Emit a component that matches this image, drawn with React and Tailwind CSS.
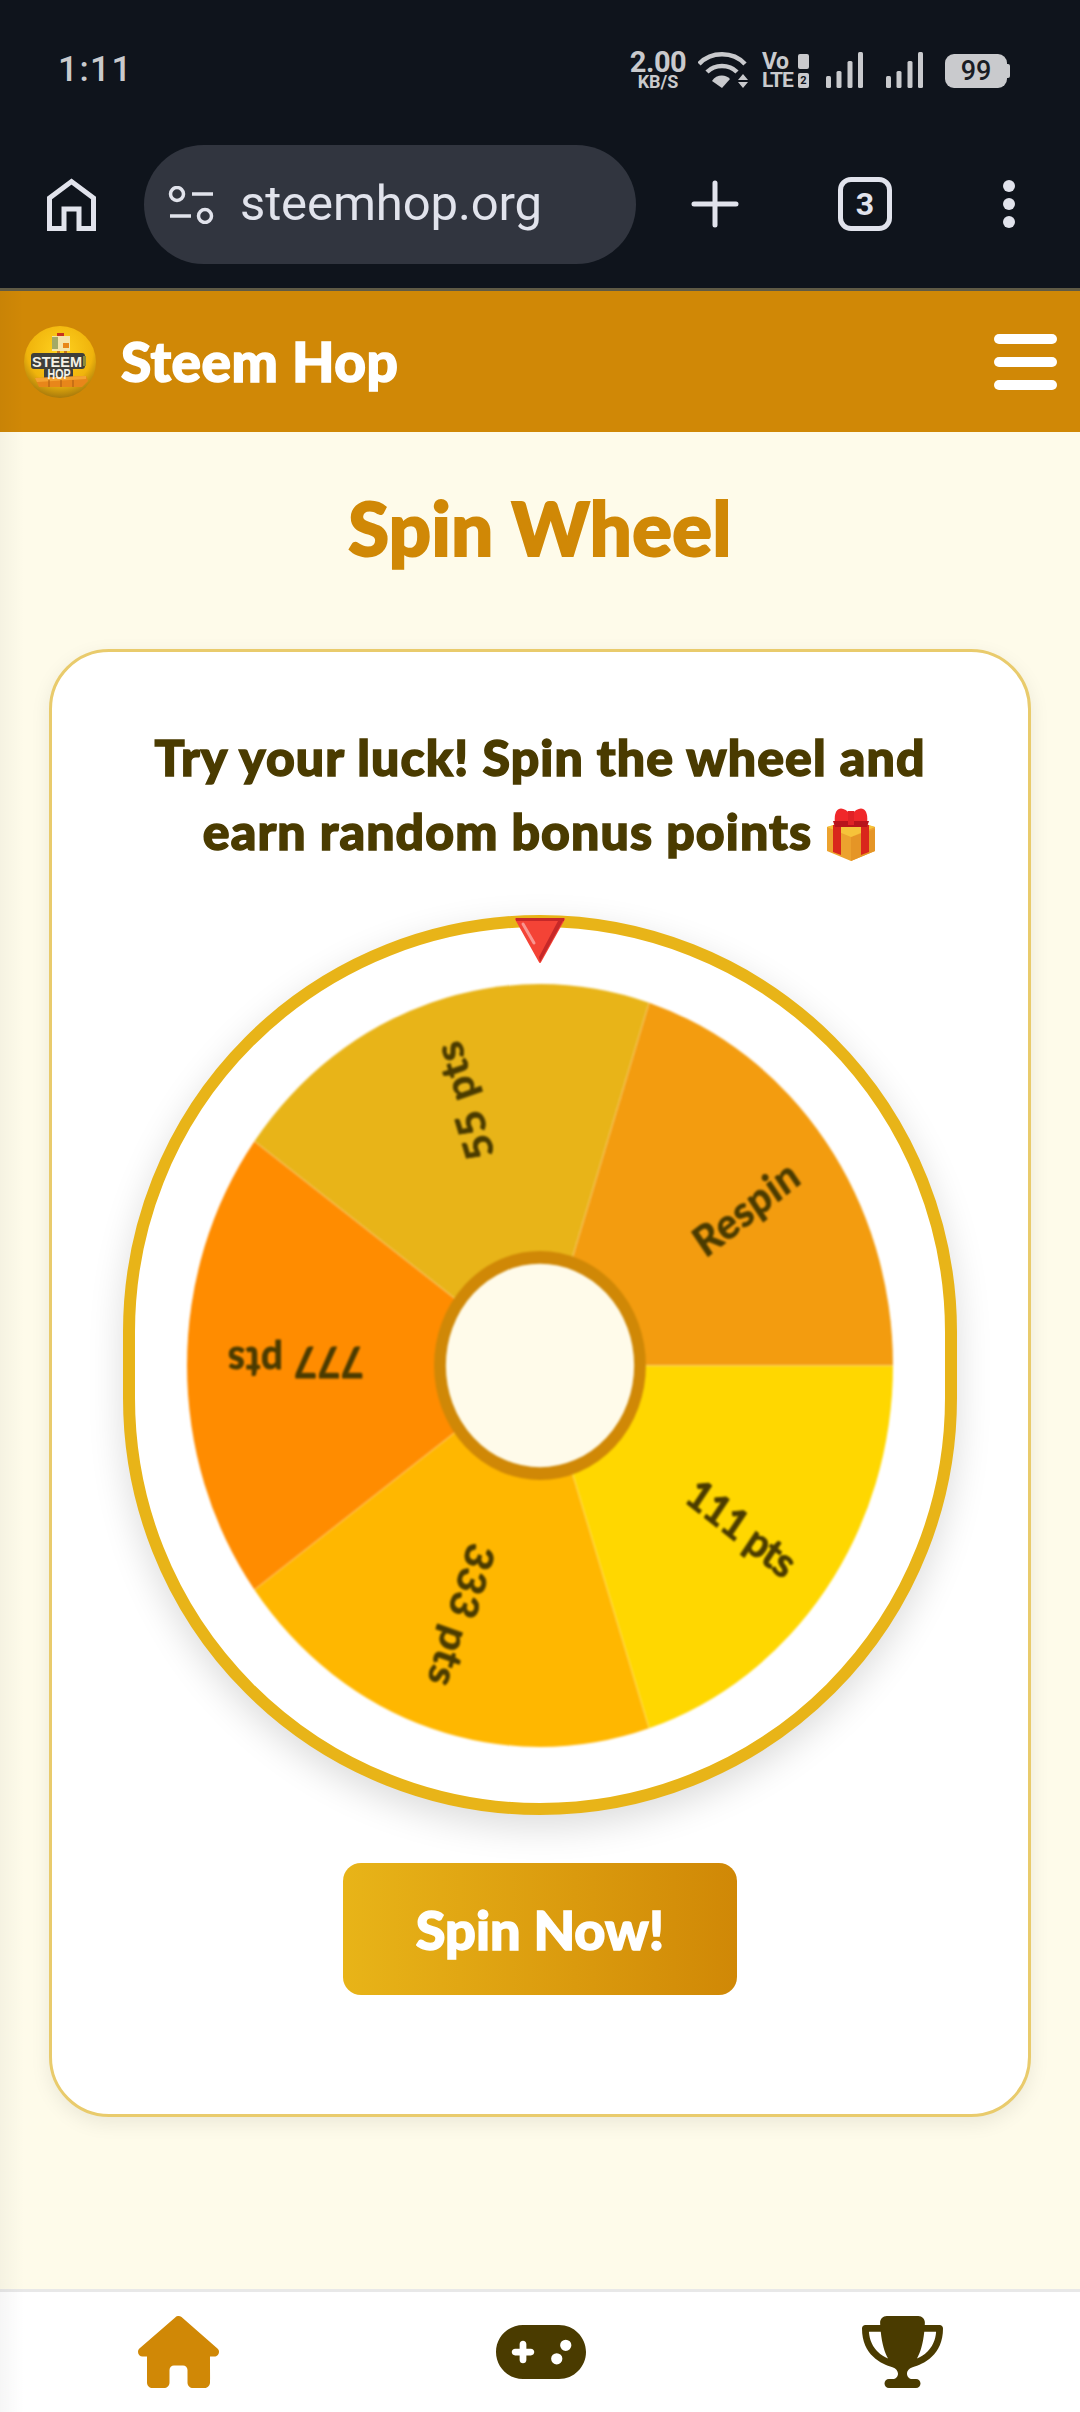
import React from "react";
import { FaHouse, FaGamepad, FaTrophy } from "react-icons/fa6";

const sectors = [
  { from: 0, to: 72, color: "#ffd700", label: "111 pts" },
  { from: 72, to: 144, color: "#ffb700", label: "333 pts" },
  { from: 144, to: 216, color: "#ff8c00", label: "777 pts" },
  { from: 216, to: 288, color: "#e8b418", label: "55 pts" },
  { from: 288, to: 360, color: "#f39c0f", label: "Respin" },
];

function pt(a) {
  const r = (a * Math.PI) / 180;
  return `${150 + 150 * Math.cos(r)} ${150 + 150 * Math.sin(r)}`;
}

function Wheel() {
  return (
    <svg viewBox="0 0 300 300" preserveAspectRatio="none" className="w-[706px] h-[763px] blur-[0.8px]">
      {sectors.map((s) => (
        <path key={s.label} d={`M150 150 L${pt(s.from)} A150 150 0 0 1 ${pt(s.to)} Z`} fill={s.color} />
      ))}
      {sectors.map((s) => (
        <line key={s.label} x1="150" y1="150" x2={150 + 150 * Math.cos((s.from * Math.PI) / 180)} y2={150 + 150 * Math.sin((s.from * Math.PI) / 180)} stroke="#fff" strokeOpacity="0.2" strokeWidth="0.6" />
      ))}
      {sectors.map((s) => (
        <text
          key={s.label}
          transform={`translate(150 150) rotate(${(s.from + s.to) / 2})`}
          x="133"
          y="1"
          textAnchor="end"
          dominantBaseline="central"
          fill="#4a3b00"
          stroke="#4a3b00"
          strokeWidth="0.35"
          strokeLinejoin="round"
          fontSize="16.5"
          fontWeight="700"
          letterSpacing={s.label === "111 pts" ? "-0.4" : "0.4"}
          fontFamily="Lato, sans-serif"
        >
          {s.label}
        </text>
      ))}
      <circle cx="150" cy="150" r="42.5" fill="#fffbea" stroke="#d08806" strokeWidth="5" />
    </svg>
  );
}

function Logo() {
  return (
    <svg viewBox="0 0 72 72" className="w-[72px] h-[72px] shrink-0">
      <defs>
        <radialGradient id="ball" cx="50%" cy="35%" r="65%">
          <stop offset="0%" stopColor="#ffd21f" />
          <stop offset="70%" stopColor="#f0b40c" />
          <stop offset="100%" stopColor="#a87a0c" />
        </radialGradient>
      </defs>
      <circle cx="36" cy="36" r="36" fill="url(#ball)" />
      <rect x="33" y="7" width="7" height="3" fill="#c8321e" />
      <rect x="28" y="10" width="18" height="15" fill="#f5e3a8" />
      <rect x="28" y="11" width="6" height="12" fill="#a3a965" />
      <rect x="39" y="17" width="6" height="5" fill="#e8861a" />
      <rect x="33" y="25" width="3" height="4" fill="#c9741a" />
      <rect x="40" y="25" width="3" height="4" fill="#c9741a" />
      <rect x="7" y="27" width="54" height="16" rx="3" fill="#3f3f3a" />
      <rect x="20" y="42" width="29" height="12" rx="2" fill="#3f3f3a" />
      <rect x="59" y="30" width="3" height="10" fill="#8a8a3a" />
      <path d="M11 52 L62 50 L64 55 L58 61 L15 61 Z" fill="#e8861a" />
      <path d="M11 52 L62 50 L62 53 L13 56 Z" fill="#f5a331" />
      <path d="M25 54V61M37 54V61M49 54V61" stroke="#a85a10" strokeWidth="1" />
      <text x="33" y="41" textAnchor="middle" fill="#f4f1e6" fontSize="14" fontWeight="700" fontFamily="'Liberation Sans', sans-serif" textLength="50" lengthAdjust="spacingAndGlyphs">STEEM</text>
      <text x="35" y="53" textAnchor="middle" fill="#f4f1e6" fontSize="14" fontWeight="700" fontFamily="'Liberation Sans', sans-serif" textLength="23" lengthAdjust="spacingAndGlyphs">HOP</text>
    </svg>
  );
}

function Gift() {
  return (
    <svg viewBox="0 0 52 54" className="inline-block w-[52px] h-[54px] align-[-11px]">
      <path d="M2 20 L26 14 L50 20 V44 L26 54 L2 44 Z" fill="#eca22e" />
      <path d="M26 30 V54 L50 44 V22 Z" fill="#e59526" />
      <path d="M2 20 L26 12 L50 20 L26 30 Z" fill="#f6c33a" />
      <path d="M8 18 H16 V48 L8 45 Z M36 18 H44 V45 L36 48 Z" fill="#d9261c" />
      <path d="M26 8 C16 -4 8 2 10 16 L24 14 Z" fill="#f0282a" />
      <path d="M26 8 C36 -4 44 2 42 16 L28 14 Z" fill="#f0282a" />
      <path d="M8 14 L44 14 L42 20 L10 20 Z" fill="#b8141c" />
      <rect x="23" y="4" width="6" height="14" fill="#e02226" />
    </svg>
  );
}

function Pointer() {
  return (
    <svg viewBox="0 0 52 46" className="w-[52px] h-[46px]">
      <path d="M2 2 H50 L26 45 Z" fill="#f44336" stroke="#f44336" strokeWidth="2" strokeLinejoin="round" />
      <path d="M50 2 L26 45 L25 40 L44 4 Z" fill="#c62828" />
      <path d="M2 1 H50 V4 H2 Z" fill="#c62828" />
      <path d="M9 7 L20 26" stroke="#f99590" strokeWidth="3" strokeLinecap="round" />
    </svg>
  );
}

function SignalBars() {
  return (
    <svg viewBox="0 0 38 36" className="w-[38px] h-[36px]" fill="#c9cacd">
      <rect x="0" y="24" width="5" height="12" rx="1.5" />
      <rect x="10.5" y="19" width="5" height="17" rx="1.5" />
      <rect x="21.5" y="9" width="5" height="27" rx="1.5" />
      <rect x="32" y="0" width="5" height="36" rx="1.5" />
    </svg>
  );
}

function StatusBar() {
  return (
    <div className="h-[145px] flex justify-between pl-[58px] pr-[70px] pt-[52px] text-[#c9cacd]" style={{ fontFamily: "Roboto, sans-serif" }}>
      <span className="text-[35px] leading-[36px] font-medium tracking-[1.5px]">1:11</span>
      <div className="flex items-start h-[37px]">
        <div className="w-[58px] flex flex-col items-center font-bold">
          <span className="text-[29px] leading-[21px] tracking-[-0.5px]">2.00</span>
          <span className="text-[18px] leading-[17px]">KB/S</span>
        </div>
        <svg viewBox="0 0 50 36" className="ml-[11px] w-[50px] h-[36px]" fill="none" stroke="#c9cacd" strokeWidth="4.5">
          <path d="M1 12 C13 -1 35 -1 47 12" />
          <path d="M9 20 C17 12 31 12 39 20" />
          <path d="M14 29 L24 36 L32 27 C28 22 18 22 14 29 Z" fill="#c9cacd" stroke="none" />
          <path d="M40 28 L45 22 L50 28 Z M40 30 L50 30 L45 36 Z" fill="#c9cacd" stroke="none" />
        </svg>
        <div className="ml-[14px] w-[47px] flex flex-col font-bold">
          <div className="flex justify-between items-center h-[19px]">
            <span className="text-[23px] leading-[19px] tracking-[-0.5px]">Vo</span>
            <span className="w-[11px] h-[15px] border-[3px] border-[#c9cacd] rounded-[2px] bg-[#c9cacd]" />
          </div>
          <div className="flex justify-between items-center h-[18px]">
            <span className="text-[21px] leading-[18px] tracking-[-1px]">LTE</span>
            <span className="w-[11px] h-[15px] bg-[#c9cacd] rounded-[2px] text-[11px] leading-[15px] text-center text-[#0f141c]">2</span>
          </div>
        </div>
        <div className="ml-[17px]"><SignalBars /></div>
        <div className="ml-[22px]"><SignalBars /></div>
        <div className="ml-[21px] w-[62px] h-[34px] mt-[2px] bg-[#c9cacd] rounded-[9px] text-[#1a1d24] text-[27px] leading-[34px] text-center font-medium">99</div>
        <div className="w-[3px] h-[14px] mt-[12px] bg-[#c9cacd] rounded-r-[2px]" />
      </div>
    </div>
  );
}

function Toolbar() {
  return (
    <div className="h-[143px] flex items-start pl-[47px] text-[#e1e3ec]" style={{ fontFamily: "Roboto, sans-serif" }}>
      <svg viewBox="0 0 49 53" className="mt-[33px] w-[49px] h-[53px]" fill="none" stroke="#e1e3ec" strokeWidth="5">
        <path d="M2.5 50.5 V20 L24.5 3.5 L46.5 20 V50.5 H32 V31 H17 V50.5 Z" />
      </svg>
      <div className="ml-[48px] w-[492px] h-[119px] rounded-full bg-[#31353f] flex items-center pl-[24px]">
        <svg viewBox="0 0 46 38" className="w-[46px] h-[38px]" fill="none" stroke="#e1e3ec" strokeWidth="3.5">
          <circle cx="9" cy="8" r="6.5" />
          <path d="M24 8 H45 M2 30 H23" />
          <circle cx="37" cy="30" r="6.5" />
        </svg>
        <span className="ml-[26px] text-[49px] leading-none pb-[3px] tracking-[-0.1px]">steemhop.org</span>
      </div>
      <svg viewBox="0 0 48 48" className="ml-[55px] mt-[35px] w-[48px] h-[48px]" stroke="#e1e3ec" strokeWidth="5" strokeLinecap="round">
        <path d="M24 3 V45 M3 24 H45" />
      </svg>
      <div className="ml-[99px] mt-[32px] w-[54px] h-[54px] border-[5px] border-[#e1e3ec] rounded-[13px] flex items-center justify-center text-[32px] font-bold leading-none">3</div>
      <div className="ml-[111px] mt-[35px] h-[48px] flex flex-col justify-between">
        <span className="w-[12px] h-[12px] rounded-full bg-[#e1e3ec]" />
        <span className="w-[12px] h-[12px] rounded-full bg-[#e1e3ec]" />
        <span className="w-[12px] h-[12px] rounded-full bg-[#e1e3ec]" />
      </div>
    </div>
  );
}

export default function App() {
  return (
    <div className="relative w-[1080px] h-[2412px] flex flex-col overflow-hidden bg-[#fefbea]" style={{ fontFamily: "Lato, sans-serif" }}>
      <div className="bg-[#0f141c]">
        <StatusBar />
        <Toolbar />
      </div>
      <header className="h-[144px] bg-[#d08806] border-t-[3px] border-[#5f5a45] flex items-center justify-between pl-[24px] pr-[23px]">
        <div className="flex items-center">
          <Logo />
          <span className="ml-[25px] text-white text-[55px] leading-none font-black [-webkit-text-stroke:1.5px_#ffffff] tracking-[0.5px]">Steem Hop</span>
        </div>
        <div className="w-[63px] flex flex-col gap-[13px]">
          <span className="h-[10px] rounded-full bg-white" />
          <span className="h-[10px] rounded-full bg-white" />
          <span className="h-[10px] rounded-full bg-white" />
        </div>
      </header>
      <main className="flex-1 flex flex-col items-center">
        <h1 className="mt-[58px] text-[#d08806] text-[74px] leading-[76px] font-black [-webkit-text-stroke:2px_#d08806] tracking-[0.5px]">Spin Wheel</h1>
        <section className="mt-[83px] w-[982px] h-[1468px] bg-white border-[3px] border-[#e9cb6c] rounded-[60px] shadow-[0_6px_20px_rgba(0,0,0,0.08)] flex flex-col items-center">
          <p className="mt-[68px] w-[800px] text-center text-[#4a3b00] text-[50px] leading-[74px] font-black tracking-[1.1px] [-webkit-text-stroke:1.5px_#4a3b00]">
            Try your luck! Spin the wheel and earn random bonus points <Gift />
          </p>
          <div className="relative mt-[47px] w-[834px] h-[900px] border-[12px] border-[#e8b418] rounded-full bg-white shadow-[0_12px_36px_rgba(0,0,0,0.14)] flex items-center justify-center">
            <div className="absolute top-[-10px] left-[379px]"><Pointer /></div>
            <Wheel />
          </div>
          <button className="mt-[48px] w-[394px] h-[132px] rounded-[18px] bg-gradient-to-r from-[#e8b418] to-[#d08806] text-white text-[54px] font-black [-webkit-text-stroke:1.5px_#ffffff]">Spin Now!</button>
        </section>
      </main>
      <nav className="h-[123px] bg-white border-t-[3px] border-[#e8e8e8] flex items-start justify-between pl-[138px] pr-[137px] pt-[24px]">
        <FaHouse className="w-[81px] h-[72px] text-[#d08806]" />
        <FaGamepad className="w-[90px] h-[72px] text-[#4a3b00]" />
        <FaTrophy className="w-[81px] h-[72px] text-[#4a3b00]" />
      </nav>
      <div className="absolute left-0 top-[291px] bottom-0 w-[24px] bg-gradient-to-r from-[rgba(0,0,0,0.035)] to-transparent" />
    </div>
  );
}
